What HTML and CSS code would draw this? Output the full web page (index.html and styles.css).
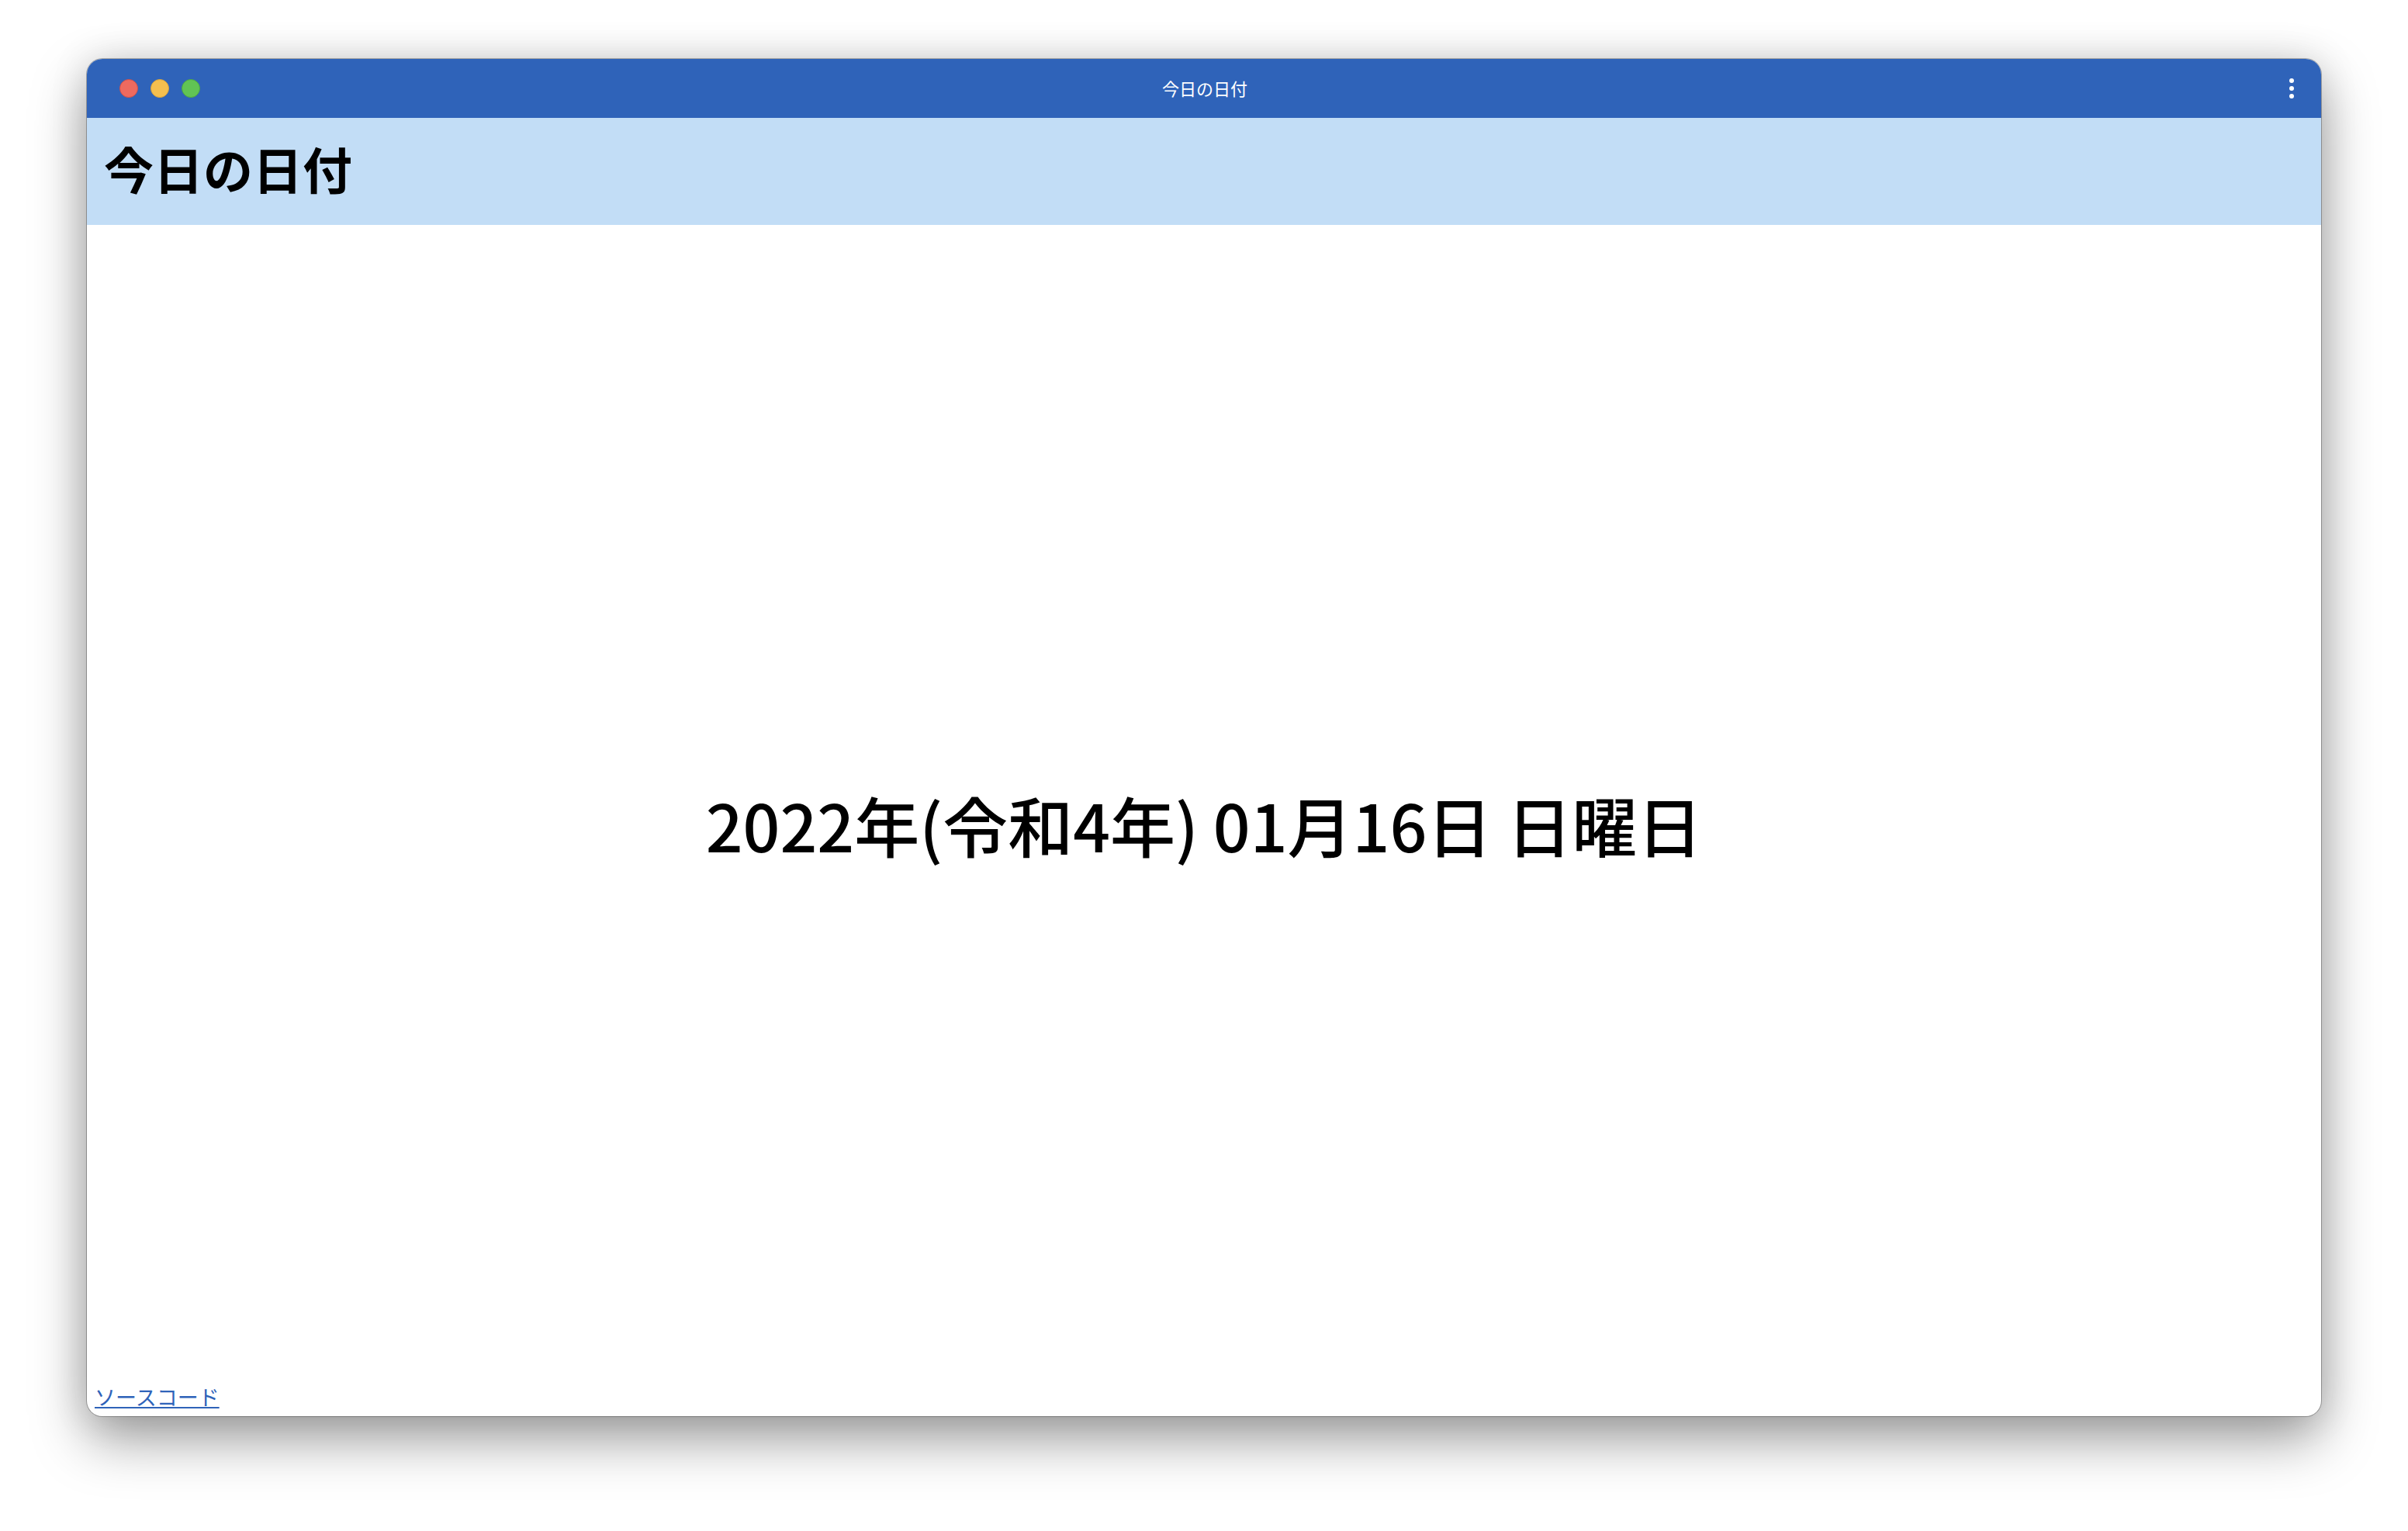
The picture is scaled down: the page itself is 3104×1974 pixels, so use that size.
FILE: index.html
```html
<!DOCTYPE html>
<html lang="ja">
<head>
<meta charset="utf-8">
<title>今日の日付</title>
<link rel="stylesheet" href="styles.css">
</head>
<body>
<div class="window">
  <div class="titlebar">
    <div class="lights">
      <span class="light red"></span>
      <span class="light yellow"></span>
      <span class="light green"></span>
    </div>
    <div class="title">今日の日付</div>
    <div class="menu">
      <span class="dot"></span>
      <span class="dot"></span>
      <span class="dot"></span>
    </div>
  </div>
  <div class="app">
    <header class="app-header">
      <h1 class="app-title">今日の日付</h1>
    </header>
    <main class="date-area">
      <p class="date">2022年(令和4年) 01月16日 日曜日</p>
    </main>
    <footer class="app-footer">
      <a class="source" href="#">ソースコード</a>
    </footer>
  </div>
</div>
</body>
</html>
```
FILE: styles.css
```css
html, body {
  margin: 0;
  padding: 0;
  background: #ffffff;
}
body {
  width: 3104px;
  height: 1974px;
  box-sizing: border-box;
  padding: 76px 112px 148px;
  font-family: "Noto Sans CJK JP", "Noto Sans", sans-serif;
}
.window {
  width: 2880px;
  height: 1750px;
  display: flex;
  flex-direction: column;
  border-radius: 20px;
  overflow: hidden;
  background: #ffffff;
  box-shadow: 0 0 0 1px rgba(0, 0, 0, 0.28), 0 30px 70px rgba(0, 0, 0, 0.38), 0 0 50px rgba(0, 0, 0, 0.12);
}
.titlebar {
  height: 76px;
  flex: none;
  background: #2f63b9;
  display: flex;
  align-items: center;
  padding: 0 37px 0 37px;
  box-sizing: border-box;
}
.lights {
  display: flex;
  gap: 16px;
  width: 200px;
  padding-left: 5px;
}
.light {
  width: 24px;
  height: 24px;
  border-radius: 50%;
  box-sizing: border-box;
}
.red { background: #ee6a5f; border: 1px solid #d0504a; }
.yellow { background: #f5bf4f; border: 1px solid #d9a43c; }
.green { background: #61c454; border: 1px solid #4ea842; }
.title {
  flex: 1;
  text-align: center;
  color: #ffffff;
  font-size: 22px;
  padding-bottom: 2px;
}
.menu {
  width: 205px;
  display: flex;
  flex-direction: column;
  align-items: flex-end;
  gap: 4px;
  margin-right: -2px;
}
.dot {
  width: 6px;
  height: 6px;
  border-radius: 50%;
  background: #ffffff;
}
.app {
  flex: 1;
  display: flex;
  flex-direction: column;
}
.app-header {
  height: 138px;
  flex: none;
  box-sizing: border-box;
  background: #c2ddf6;
  display: flex;
  align-items: center;
  padding: 0 0 10px 22px;
}
.app-title {
  margin: 0;
  font-size: 64px;
  font-weight: 700;
  color: #000000;
  line-height: 1;
}
.date-area {
  flex: 1;
  display: flex;
  align-items: center;
  justify-content: center;
  padding-top: 54px;
}
.date {
  margin: 0;
  font-size: 84px;
  font-weight: 500;
  color: #000000;
}
.app-footer {
  padding: 0 0 6px 10px;
}
.source {
  font-size: 27px;
  color: #2f63b9;
  text-decoration: underline;
}
```
